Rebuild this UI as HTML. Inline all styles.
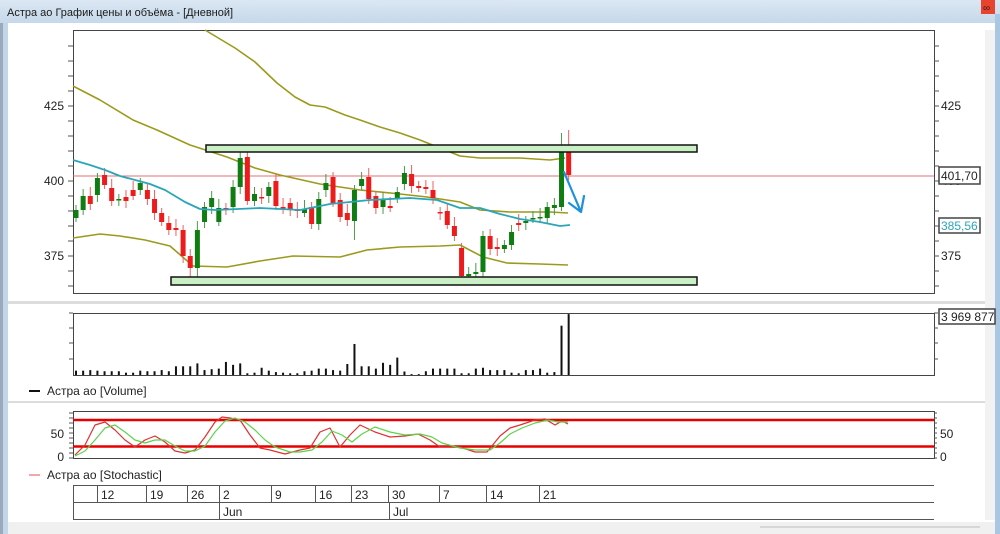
<!DOCTYPE html>
<html><head><meta charset="utf-8"><style>
html,body{margin:0;padding:0;width:1000px;height:534px;overflow:hidden;background:#fff;font-family:"Liberation Sans","DejaVu Sans",sans-serif;}
svg{position:absolute;left:0;top:0}
</style></head><body>
<svg id="s" width="1000" height="534" xmlns="http://www.w3.org/2000/svg" font-family="Liberation Sans, DejaVu Sans, sans-serif">
<defs><linearGradient id="tb" x1="0" y1="0" x2="0" y2="1"><stop offset="0" stop-color="#dbe7f3"/><stop offset="1" stop-color="#c6d8ea"/></linearGradient></defs>
<rect x="0" y="0" width="1000" height="534" fill="#fff"/>
<rect x="0" y="0" width="1000" height="23" fill="url(#tb)"/>
<text x="7" y="16" font-size="11" fill="#1a1a1a">Астра ао График цены и объёма - [Дневной]</text>
<rect x="981" y="0" width="14" height="14" fill="#e8432f"/>
<text x="983" y="11" font-size="10" fill="#3a1a10">∞</text>
<rect x="0" y="23" width="3" height="511" fill="#9aaabb"/>
<rect x="3" y="23" width="5" height="511" fill="#c2d6ea"/>
<rect x="995" y="14" width="5" height="520" fill="#a9c6e3"/>
<rect x="985" y="30" width="10" height="490" fill="#f2f2f2"/>
<rect x="8" y="522" width="987" height="12" fill="#f0f0f0"/>
<line x1="760" y1="527" x2="980" y2="527" stroke="#bbb" stroke-width="1"/>
<rect x="8" y="301" width="977" height="3" fill="#dcdcdc"/>
<rect x="8" y="401" width="977" height="2" fill="#dcdcdc"/>
<g id="main"></g>
</svg>
<script>
(function(){
var s=document.getElementById('main');var h='';
function L(x1,y1,x2,y2,c,w){h+='<line x1="'+x1+'" y1="'+y1+'" x2="'+x2+'" y2="'+y2+'" stroke="'+c+'" stroke-width="'+(w||1)+'"/>';}
function R(x,y,w,hh,f,st){h+='<rect x="'+x+'" y="'+y+'" width="'+w+'" height="'+hh+'" fill="'+f+'"'+(st?' stroke="'+st+'" stroke-width="1.5"':'')+'/>';}
function T(x,y,t,c,sz,a){h+='<text x="'+x+'" y="'+y+'" font-size="'+(sz||12)+'" fill="'+(c||'#222')+'"'+(a?' text-anchor="'+a+'"':'')+'>'+t+'</text>';}
function P(pts,c,w){h+='<polyline fill="none" stroke="'+c+'" stroke-width="'+(w||1.6)+'" stroke-linejoin="round" points="'+pts.map(function(p){return p.join(',')}).join(' ')+'"/>';}
h+='<rect x="73.5" y="30.5" width="861" height="263" fill="none" stroke="#444"/>';
for(var y=46;y<293;y+=15){L(68,y,73,y,'#555');L(934,y,939,y,'#555');}
T(64,110,'425','#222',12,'end');T(64,185,'400','#222',12,'end');T(64,260,'375','#222',12,'end');
T(941,110,'425');T(941,260,'375');T(941,185,'400');
L(73,176,934,176,'#e07070',1);
var ol='#9c9a1c';
P([[205,30],[235,48],[255,62],[277,83],[295,97],[310,105],[325,107],[345,115],[360,120],[380,127],[400,133],[420,140],[440,148],[460,156],[480,158],[520,158],[550,160],[565,158]],ol);
P([[73,86],[100,100],[133,120],[157,130],[190,145],[227,157],[255,168],[280,175],[320,184],[360,190],[400,194],[427,197],[460,202],[480,210],[510,212],[550,212],[568,213]],ol);
P([[73,238],[100,234],[120,236],[145,240],[170,246],[193,266],[227,267],[260,261],[293,256],[340,257],[367,250],[400,247],[440,246],[460,245],[483,257],[507,263],[540,264],[568,265]],ol);
var c=[[210,218,'g'],[196,210,'g'],[196,204,'r'],[178,195,'g'],[175,185,'r'],[188,201,'r'],[199,200,'g'],[197,201,'r'],[190,196,'r'],[183,190,'g'],[190,199,'r'],[199,213,'r'],[213,222,'r'],[223,230,'r'],[228,230,'r'],[230,256,'r'],[256,268,'r'],[230,268,'g'],[207,222,'g'],[198,207,'g'],[208,222,'g'],[208,210,'r'],[187,207,'g'],[158,187,'g'],[157,201,'r'],[194,201,'g'],[197,198,'r'],[187,196,'g'],[181,206,'r'],[207,209,'r'],[203,210,'r'],[209,211,'r'],[209,213,'g'],[207,224,'r'],[199,224,'g'],[183,190,'g'],[177,203,'r'],[200,217,'r'],[213,220,'r'],[190,221,'g'],[179,186,'g'],[177,199,'r'],[196,208,'r'],[199,207,'g'],[206,208,'r'],[192,198,'g'],[173,184,'g'],[174,186,'r'],[186,188,'r'],[187,189,'r'],[190,198,'r'],[212,213,'r'],[211,225,'r'],[226,236,'r'],[248,276,'r'],[274,276,'g'],[272,274,'g'],[236,272,'g'],[236,249,'r'],[247,249,'r'],[245,249,'g'],[232,245,'g'],[223,225,'r'],[221,223,'g'],[218,219,'g'],[217,218,'g'],[207,218,'g'],[205,208,'g'],[147,207,'g'],[147,175,'r']];
var wk={16:285,17:282,23:148,24:145,39:240,54:278,57:283,68:133,69:130};
for(var i=0;i<c.length;i++){var x=76+i*7.14,d=c[i],col=d[2]=='g'?'#0f7d12':'#ec1c1c',wc=d[2]=='g'?'#4c9a4c':'#ee6060';
var wt=d[0]-5-(i%3)*2,wb=d[1]+4+(i%4);if(wk[i]){if(wk[i]<d[0])wt=wk[i];else wb=wk[i];}
L(x,wt,x,wb,wc,1);R(x-2.5,d[0],5,Math.max(1.5,d[1]-d[0]),col);}
P([[73,160],[90,165],[105,170],[120,176],[150,184],[165,190],[185,202],[200,209],[215,210],[260,208],[300,210],[330,204],[370,200],[410,198],[437,200],[460,208],[480,208],[500,214],[520,219],[540,222],[560,226],[570,225]],'#2aa6b8',1.8);
R(206,145,491,7,'#c9f0c4','#111');R(171,277,526,8,'#c9f0c4','#111');
h+='<path d="M564 172 L581 212 M581 212 L584 196 M581 212 L569 203" stroke="#1e90e0" stroke-width="2.2" fill="none" stroke-linecap="round"/>';
R(939,167,41,17,'#fff','#444');T(941,180,'401,70','#222',12);
R(939,218,41,15,'#fff','#444');T(941,230,'385,56','#2aa6b8',12);
h+='<rect x="73.5" y="313.5" width="861" height="62" fill="none" stroke="#444"/>';
[313,328,343,359].forEach(function(y){L(69,y,73,y,'#555');L(934,y,938,y,'#555');});
var v=[15,15,17,15,13,13,13,8,8,15,13,13,17,13,30,30,30,40,17,20,22,45,35,40,6,8,25,15,10,8,6,6,13,15,22,22,17,15,38,107,30,30,22,42,35,60,12,3,3,13,22,22,22,22,6,6,22,25,17,17,17,8,6,17,17,22,8,10,170,210];
for(var i=0;i<v.length;i++){var x=76+i*7.14;R(x-1,375-v[i]*0.29,2,v[i]*0.29,'#111');}
R(939,309,56,15,'#fff','#444');T(941,321,'3 969 877','#222',12);
L(29,391,40,391,'#111',2);T(47,395,'Астра ао [Volume]','#222',12);
h+='<rect x="73.5" y="411.5" width="861" height="47" fill="none" stroke="#444"/>';
for(var y=413;y<459;y+=5){L(69,y,73,y,'#555');L(934,y,937,y,'#555');}
T(64,438,'50','#222',12,'end');T(64,461,'0','#222',12,'end');T(940,438,'50');T(940,461,'0');
L(73,420,934,420,'#e80000',2.5);L(73,446.5,934,446.5,'#e80000',2.5);
P([[75,455],[85,445],[95,425],[105,422],[115,430],[125,440],[135,447],[145,440],[155,436],[165,442],[175,451],[185,453],[195,450],[205,437],[215,422],[222,417],[230,418],[240,420],[250,435],[260,448],[270,450],[285,454],[300,450],[310,448],[320,432],[330,428],[340,447],[350,435],[360,425],[375,432],[390,437],[405,436],[418,434],[430,440],[440,447],[460,447],[475,452],[487,452],[500,436],[510,428],[520,425],[535,420],[545,419],[555,425],[562,421],[568,424]],'#e03030',1.2);
P([[75,456],[85,451],[95,440],[105,428],[115,425],[125,432],[135,440],[145,443],[155,440],[165,440],[175,446],[185,451],[195,451],[205,446],[215,432],[225,421],[235,418],[245,422],[255,430],[265,440],[275,447],[290,452],[300,452],[312,450],[322,442],[332,431],[342,435],[352,442],[362,434],[375,427],[390,432],[405,435],[420,434],[432,437],[442,443],[460,448],[475,450],[490,450],[500,443],[510,434],[522,428],[535,423],[548,420],[558,422],[568,422]],'#5ad44a',1.2);
L(29,475,40,475,'#e05050',1);T(47,479,'Астра ао [Stochastic]','#222',12);
h+='<path d="M73.5 485.5 H934 M73.5 502.5 H934 M73.5 519.5 H934 M73.5 485 V520" stroke="#555" fill="none"/>';
var dx=[97,146,187,219,271,315,351,388,439,486,539],dl=['12','19','26','2','9','16','23','30','7','14','21'];
for(var i=0;i<dx.length;i++){L(dx[i]+.5,485,dx[i]+.5,502,'#555');T(dx[i]+4,499,dl[i],'#222',12);}
L(219.5,502,219.5,520,'#555');L(389.5,502,389.5,520,'#555');
T(223,516,'Jun','#222',12);T(393,516,'Jul','#222',12);
s.innerHTML=h;
})();
</script>
</body></html>
